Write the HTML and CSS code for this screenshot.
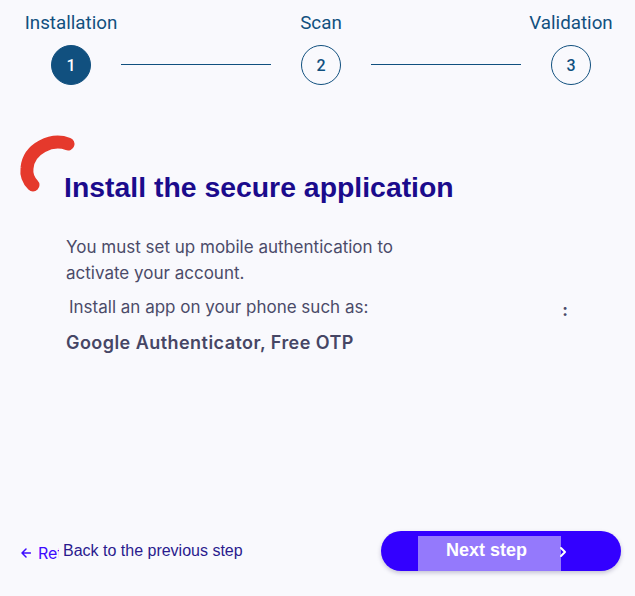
FILE: index.html
```html
<!DOCTYPE html>
<html lang="en">
<head>
<meta charset="utf-8">
<title>Install the secure application</title>
<link rel="stylesheet" href="styles.css">
</head>
<body>
<div class="page">
  <div class="stepper">
    <div class="step">
      <span class="step-label">Installation</span>
      <span class="step-dot active">1</span>
    </div>
    <div class="step-line"></div>
    <div class="step">
      <span class="step-label">Scan</span>
      <span class="step-dot">2</span>
    </div>
    <div class="step-line"></div>
    <div class="step">
      <span class="step-label">Validation</span>
      <span class="step-dot">3</span>
    </div>
  </div>

  <div class="title-row">
    <svg class="arc" width="62" height="64" viewBox="0 0 62 64" aria-hidden="true">
      <path d="M52 12 C36 6 13 16 11 36 C10 44 13 49 17 53" fill="none" stroke="#e5392c" stroke-width="13" stroke-linecap="round"/>
    </svg>
    <h1 class="title">Install the secure application</h1>
  </div>

  <div class="content">
    <p class="intro">You must set up mobile authentication to<br>activate your account.</p>
    <div class="install-row">
      <span class="install-text">Install an app on your phone such as:</span>
      <span class="colon">:</span>
    </div>
    <p class="apps">Google Authenticator, Free OTP</p>
  </div>

  <div class="footer">
    <a class="back" href="#">
      <span class="back-return">
        <svg class="arrow" width="10" height="10" viewBox="0 0 10 10" aria-hidden="true">
          <path d="M9.5 5 H1 M5 1 L1 5 L5 9" fill="none" stroke="#3d0bff" stroke-width="1.5" stroke-linecap="round" stroke-linejoin="round"/>
        </svg><span class="return-text">Return</span>
      </span>
      <span class="back-text">Back to the previous step</span>
    </a>
    <button class="next" type="button">
      <span class="next-label">Next step</span>
      <svg class="chev" width="8" height="12" viewBox="0 0 8 12" aria-hidden="true">
        <path d="M2 2 L6 6 L2 10" fill="none" stroke="#ffffff" stroke-width="2" stroke-linecap="round" stroke-linejoin="round"/>
      </svg>
    </button>
  </div>
</div>
</body>
</html>
```

FILE: styles.css
```css
* { box-sizing: border-box; }

html, body {
  margin: 0;
  padding: 0;
  background: #f9f9fd;
}

body {
  font-family: "Liberation Sans", Arial, sans-serif;
  width: 635px;
  height: 596px;
  overflow: hidden;
}

.page {
  display: flex;
  flex-direction: column;
  height: 596px;
}

/* Stepper */
.stepper {
  display: flex;
  padding: 12px 0 0 21px;
}

.step {
  width: 100px;
  display: flex;
  flex-direction: column;
  align-items: center;
  gap: 11px;
}

.step-label {
  font-family: Roboto, "Noto Sans", sans-serif;
  font-size: 18.8px;
  line-height: 22px;
  color: #11507f;
  white-space: nowrap;
}

.step-dot {
  width: 40px;
  height: 40px;
  border-radius: 50%;
  border: 1px solid #11507f;
  display: flex;
  align-items: center;
  justify-content: center;
  font-family: Roboto, "Noto Sans", sans-serif;
  font-size: 16px;
  font-weight: 500;
  color: #11507f;
}

.step-dot.active {
  background: #11507f;
  color: #ffffff;
}

.step-line {
  width: 150px;
  height: 1px;
  background: #11507f;
  align-self: flex-end;
  margin-bottom: 20px;
}

/* Title */
.title-row {
  display: flex;
  align-items: flex-start;
  margin-top: 47px;
  padding-left: 16px;
}

.arc {
  display: block;
  flex: none;
}

.title {
  margin: 39px 0 0 -14px;
  font-family: "Liberation Sans", Arial, sans-serif;
  font-weight: 700;
  font-size: 28.4px;
  line-height: 32px;
  color: #1b0b8c;
  white-space: nowrap;
}

/* Content */
.content {
  padding-left: 66px;
  margin-top: 32px;
}

.intro {
  margin: 0;
  font-family: Inter, "Liberation Sans", sans-serif;
  font-size: 17px;
  line-height: 25.7px;
  color: #4b4b69;
}

.install-row {
  display: flex;
  width: 502px;
  margin-top: 9px;
  padding-left: 3px;
  font-family: Inter, "Liberation Sans", sans-serif;
  font-size: 17px;
  line-height: 25px;
  color: #4b4b69;
}

.colon {
  margin-left: auto;
  font-weight: 700;
  color: #4b4b69;
  position: relative;
  top: 3px;
}

.apps {
  margin: 11px 0 0;
  font-family: Inter, "Liberation Sans", sans-serif;
  font-weight: 600;
  font-size: 18px;
  letter-spacing: 0.45px;
  line-height: 24px;
  color: #464665;
}

/* Footer */
.footer {
  margin-top: auto;
  display: flex;
  align-items: center;
  justify-content: space-between;
  padding: 0 14px 25px 21px;
}

.back {
  display: flex;
  align-items: center;
  text-decoration: none;
}

.back-return {
  display: flex;
  align-items: center;
  gap: 7px;
  width: 38px;
  margin-right: 4px;
  overflow: hidden;
  white-space: nowrap;
  position: relative;
  top: 2px;
}

.arrow {
  flex: none;
  display: block;
}

.return-text {
  font-family: Inter, "Liberation Sans", sans-serif;
  font-size: 16px;
  color: #3d0bff;
}

.back-text {
  font-family: "Liberation Sans", Arial, sans-serif;
  font-size: 16px;
  color: #2a1b8e;
}

.next {
  width: 240px;
  height: 40px;
  border: 0;
  border-radius: 20px;
  background: #3300ff;
  box-shadow: 0 2px 4px rgba(40, 30, 90, 0.25);
  display: flex;
  align-items: flex-end;
  padding: 0 0 0 37px;
  cursor: pointer;
}

.next-label {
  width: 143px;
  height: 35px;
  background: #9479fc;
  color: #ffffff;
  font-family: "Liberation Sans", Arial, sans-serif;
  font-weight: 700;
  font-size: 18px;
  line-height: 29px;
  padding-left: 28px;
  text-align: left;
}

.chev {
  align-self: center;
  margin-left: -2px;
  margin-top: 2px;
}
```
